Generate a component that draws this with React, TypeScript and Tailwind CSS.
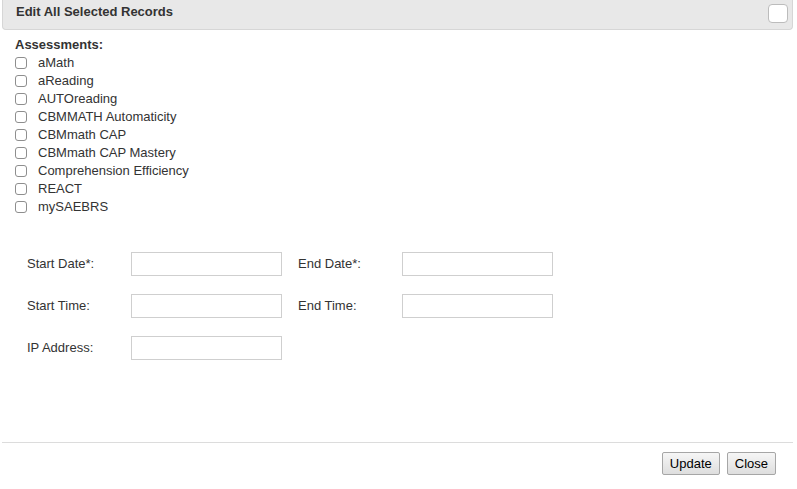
import React from 'react'

const assessments = [
  'aMath',
  'aReading',
  'AUTOreading',
  'CBMMATH Automaticity',
  'CBMmath CAP',
  'CBMmath CAP Mastery',
  'Comprehension Efficiency',
  'REACT',
  'mySAEBRS',
]

function Field({ label }: { label: string }) {
  return (
    <div className="flex items-center">
      <label className="w-[104px] text-[13px] text-[#333]">{label}</label>
      <input
        type="text"
        className="w-[151px] h-[24px] border border-[#cfcfcf] bg-white outline-none"
      />
    </div>
  )
}

export default function App() {
  return (
    <div
      className="w-[797px] h-[489px] bg-white px-[2px] flex flex-col"
      style={{ fontFamily: '"Liberation Sans", Arial, sans-serif' }}
    >
      {/* Title bar */}
      <div className="h-[30px] w-[791px] shrink-0 bg-[#e8e8e8] border border-t-0 border-[#d6d6d6] rounded-b-[4px] flex items-start justify-between pl-[13px] pr-[4px] pt-[4px]">
        <span className="text-[13px] leading-[16px] font-bold text-[#333]">Edit All Selected Records</span>
        <button className="w-[20px] h-[19px] bg-white border border-[#bcbcbc] rounded-[4px]" />
      </div>

      {/* Body */}
      <div className="h-[412px] shrink-0 pl-[13px] pt-[6px]">
        <div className="h-[18px] flex items-center text-[13px] font-bold text-[#333]">Assessments:</div>
        <div className="flex flex-col">
          {assessments.map((name) => (
            <div key={name} className="h-[18px] flex items-center">
              <span className="w-[12px] h-[12px] border border-[#8e8e8e] rounded-[3px] bg-white mr-[11px]" />
              <span className="text-[13px] text-[#333]">{name}</span>
            </div>
          ))}
        </div>

        <div className="mt-[36px] ml-[12px] grid grid-cols-[271px_255px] gap-y-[18px]">
          <Field label="Start Date*:" />
          <Field label="End Date*:" />
          <Field label="Start Time:" />
          <Field label="End Time:" />
          <Field label="IP Address:" />
        </div>
      </div>

      {/* Footer */}
      <div className="w-[791px] border-t border-[#dcdcdc] flex justify-end gap-[7px] pt-[9px] pr-[17px]">
        <button className="h-[23px] px-[7px] text-[13px] text-black bg-gradient-to-b from-[#f6f6f6] to-[#dedede] border border-[#a6a6a6] rounded-[2px]">
          Update
        </button>
        <button className="h-[23px] px-[7px] text-[13px] text-black bg-gradient-to-b from-[#f6f6f6] to-[#dedede] border border-[#a6a6a6] rounded-[2px]">
          Close
        </button>
      </div>
    </div>
  )
}
